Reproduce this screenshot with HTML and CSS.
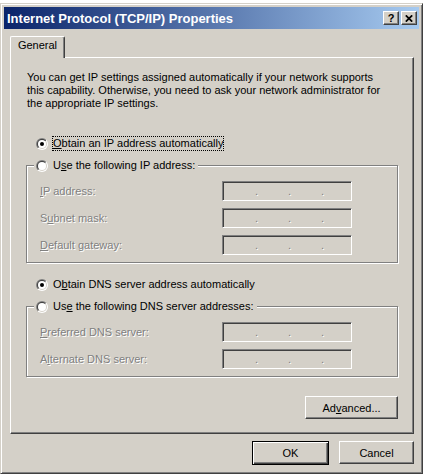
FILE: index.html
```html
<!DOCTYPE html>
<html>
<head>
<meta charset="utf-8">
<title>Internet Protocol (TCP/IP) Properties</title>
<link rel="stylesheet" href="styles.css">
</head>
<body>
<svg class="defs" width="0" height="0" aria-hidden="true">
  <defs>
    <linearGradient id="rOuter" x1="0" y1="0" x2="1" y2="1">
      <stop offset="0.5" stop-color="#808080"/><stop offset="0.5" stop-color="#ffffff"/>
    </linearGradient>
    <linearGradient id="rInner" x1="0" y1="0" x2="1" y2="1">
      <stop offset="0.5" stop-color="#404040"/><stop offset="0.5" stop-color="#d4d0c8"/>
    </linearGradient>
  </defs>
</svg>
<div class="window">
  <div class="titlebar">
    <span class="title">Internet Protocol (TCP/IP) Properties</span>
    <div class="caption-buttons">
      <span class="cap-btn help">?</span>
      <span class="cap-btn close"><svg width="8" height="7" viewBox="0 0 8 7"><path d="M0.8 0.3 L7.2 6.7 M7.2 0.3 L0.8 6.7" stroke="#000" stroke-width="1.7" fill="none"/></svg></span>
    </div>
  </div>
  <div class="dialog-body">
    <div class="tabs"><div class="tab active">General</div></div>
    <div class="panel">
      <p class="intro">You can get IP settings assigned automatically if your network supports<br>this capability. Otherwise, you need to ask your network administrator for<br>the appropriate IP settings.</p>

      <div class="radio-row first">
        <svg class="radio" width="12" height="12" viewBox="0 0 12 12"><circle cx="6" cy="6" r="6" fill="url(#rOuter)"/><circle cx="6" cy="6" r="5" fill="url(#rInner)"/><circle cx="6" cy="6" r="4" fill="#fff"/><circle cx="6" cy="6" r="2" fill="#000"/></svg>
        <span class="radio-label focus"><u>O</u>btain an IP address automatically</span>
      </div>

      <fieldset class="group">
        <legend class="radio-row legend">
          <svg class="radio" width="12" height="12" viewBox="0 0 12 12"><circle cx="6" cy="6" r="6" fill="url(#rOuter)"/><circle cx="6" cy="6" r="5" fill="url(#rInner)"/><circle cx="6" cy="6" r="4" fill="#fff"/></svg>
          <span class="radio-label">U<u>s</u>e the following IP address:</span>
        </legend>
        <div class="field-row">
          <span class="field-label disabled"><u>I</u>P address:</span>
          <div class="ip-field"><span class="seg"></span><span class="dot">.</span><span class="seg"></span><span class="dot">.</span><span class="seg"></span><span class="dot">.</span><span class="seg"></span></div>
        </div>
        <div class="field-row">
          <span class="field-label disabled">S<u>u</u>bnet mask:</span>
          <div class="ip-field"><span class="seg"></span><span class="dot">.</span><span class="seg"></span><span class="dot">.</span><span class="seg"></span><span class="dot">.</span><span class="seg"></span></div>
        </div>
        <div class="field-row">
          <span class="field-label disabled"><u>D</u>efault gateway:</span>
          <div class="ip-field"><span class="seg"></span><span class="dot">.</span><span class="seg"></span><span class="dot">.</span><span class="seg"></span><span class="dot">.</span><span class="seg"></span></div>
        </div>
      </fieldset>

      <div class="radio-row second">
        <svg class="radio" width="12" height="12" viewBox="0 0 12 12"><circle cx="6" cy="6" r="6" fill="url(#rOuter)"/><circle cx="6" cy="6" r="5" fill="url(#rInner)"/><circle cx="6" cy="6" r="4" fill="#fff"/><circle cx="6" cy="6" r="2" fill="#000"/></svg>
        <span class="radio-label">O<u>b</u>tain DNS server address automatically</span>
      </div>

      <fieldset class="group">
        <legend class="radio-row legend">
          <svg class="radio" width="12" height="12" viewBox="0 0 12 12"><circle cx="6" cy="6" r="6" fill="url(#rOuter)"/><circle cx="6" cy="6" r="5" fill="url(#rInner)"/><circle cx="6" cy="6" r="4" fill="#fff"/></svg>
          <span class="radio-label">Us<u>e</u> the following DNS server addresses:</span>
        </legend>
        <div class="field-row">
          <span class="field-label disabled"><u>P</u>referred DNS server:</span>
          <div class="ip-field"><span class="seg"></span><span class="dot">.</span><span class="seg"></span><span class="dot">.</span><span class="seg"></span><span class="dot">.</span><span class="seg"></span></div>
        </div>
        <div class="field-row">
          <span class="field-label disabled">A<u>l</u>ternate DNS server:</span>
          <div class="ip-field"><span class="seg"></span><span class="dot">.</span><span class="seg"></span><span class="dot">.</span><span class="seg"></span><span class="dot">.</span><span class="seg"></span></div>
        </div>
      </fieldset>

      <div class="advanced-row">
        <button class="btn advanced" type="button">Ad<u>v</u>anced...</button>
      </div>
    </div>
    <div class="button-row">
      <button class="btn default" type="button">OK</button>
      <button class="btn" type="button">Cancel</button>
    </div>
  </div>
</div>
</body>
</html>
```
FILE: styles.css
```css
* {
  box-sizing: border-box;
}

html,
body {
  margin: 0;
  padding: 0;
  background: #ffffff;
}

body {
  font-family: "Liberation Sans", Arial, sans-serif;
  font-size: 11px;
  color: #000000;
}

.defs {
  position: absolute;
  width: 0;
  height: 0;
}

/* ---------- window frame ---------- */
.window {
  width: 423px;
  height: 471px;
  margin-top: 3px;
  padding: 3px;
  background: #d4d0c8;
  border: 1px solid;
  border-color: #d4d0c8 #404040 #404040 #d4d0c8;
  box-shadow: inset 1px 1px 0 #ffffff, inset -1px -1px 0 #808080;
  display: flex;
  flex-direction: column;
}

.titlebar {
  height: 22px;
  flex: none;
  padding: 0 2px 0 3px;
  background: linear-gradient(to right, #0a246a 0%, #a6caf0 100%);
  display: flex;
  align-items: center;
  justify-content: space-between;
}

.title {
  color: #ffffff;
  font-weight: bold;
  font-size: 13px;
  white-space: nowrap;
}

.caption-buttons {
  display: flex;
  gap: 2px;
}

.cap-btn {
  width: 16px;
  height: 14px;
  background: #d4d0c8;
  border: 1px solid;
  border-color: #ffffff #404040 #404040 #ffffff;
  box-shadow: inset -1px -1px 0 #808080;
  display: flex;
  align-items: center;
  justify-content: center;
}

.cap-btn.help {
  font-weight: bold;
  font-size: 11px;
  line-height: 12px;
  padding-bottom: 1px;
}

/* ---------- dialog body ---------- */
.dialog-body {
  flex: 1;
  display: flex;
  flex-direction: column;
  padding: 7px 5px 0 6px;
}

.tabs {
  height: 21px;
  flex: none;
  display: flex;
  align-items: flex-start;
}

.tab {
  position: relative;
  z-index: 1;
  width: 55px;
  height: 22px;
  background: #d4d0c8;
  border-top: 1px solid #ffffff;
  border-left: 1px solid #ffffff;
  border-right: 1px solid #404040;
  box-shadow: inset -1px 0 0 #808080;
  border-radius: 2px 2px 0 0;
  text-align: center;
  line-height: 13px;
  padding-top: 2px;
}

.panel {
  width: 404px;
  height: 377px;
  flex: none;
  border-top: 1px solid #ffffff;
  border-left: 1px solid #ffffff;
  border-right: 1px solid #404040;
  border-bottom: 1px solid #404040;
  box-shadow: inset -1px -1px 0 #808080;
  padding: 13px 15px 0 15px;
  display: flex;
  flex-direction: column;
}

.intro {
  margin: 0;
  padding-left: 1px;
  line-height: 13px;
  white-space: nowrap;
}

/* ---------- radios ---------- */
.radio-row {
  height: 15px;
  display: flex;
  align-items: center;
  white-space: nowrap;
}

.radio-row.first {
  margin-top: 26px;
  padding-left: 10px;
}

.radio-row.second {
  margin-top: 14px;
  padding-left: 10px;
}

.radio {
  flex: none;
  display: block;
}

.radio-label {
  margin-left: 4px;
  padding: 0 1px;
  height: 15px;
  line-height: 15px;
}

.radio-label.focus {
  outline: 1px dotted #000000;
  outline-offset: -1px;
}

/* ---------- group boxes ---------- */
.group {
  margin: 7px 0 0 0;
  padding: 8px 0 7px 13px;
  width: 372px;
  min-inline-size: 0;
  border: 1px solid #808080;
  box-shadow: inset 1px 1px 0 #ffffff, 1px 1px 0 #ffffff;
}

.legend {
  margin-left: -6px;
  padding: 0 2px;
  background: #d4d0c8;
}

.field-row {
  height: 20px;
  display: flex;
  align-items: center;
}

.field-row + .field-row {
  margin-top: 7px;
}

.field-label {
  width: 182px;
  white-space: nowrap;
}

.disabled {
  color: #808080;
  text-shadow: 1px 1px 0 #ffffff;
}

.ip-field {
  width: 130px;
  height: 20px;
  background: #d4d0c8;
  border: 1px solid;
  border-color: #808080 #ffffff #ffffff #808080;
  box-shadow: inset 1px 1px 0 #404040, inset -1px -1px 0 #d4d0c8;
  display: flex;
  align-items: center;
  padding-left: 2px;
  line-height: 13px;
}

.seg {
  width: 30px;
  height: 13px;
  flex: none;
}

.dot {
  width: 3px;
  flex: none;
  color: #808080;
  text-shadow: 1px 1px 0 #ffffff;
}

/* ---------- buttons ---------- */
.btn {
  font-family: "Liberation Sans", Arial, sans-serif;
  font-size: 11px;
  color: #000000;
  background: #d4d0c8;
  width: 75px;
  height: 23px;
  padding: 0;
  margin: 0;
  border: 1px solid;
  border-color: #ffffff #404040 #404040 #ffffff;
  box-shadow: inset -1px -1px 0 #808080;
  border-radius: 0;
}

.btn.default {
  width: 77px;
  height: 24px;
  border-color: #000000;
  box-shadow: inset 1px 1px 0 #ffffff, inset -1px -1px 0 #404040, inset -2px -2px 0 #808080;
}

.advanced-row {
  margin-top: 19px;
  display: flex;
  justify-content: flex-end;
  width: 372px;
}

.btn.advanced {
  width: 93px;
  height: 23px;
}

.button-row {
  margin-top: 7px;
  display: flex;
  justify-content: flex-end;
  align-items: flex-start;
  gap: 10px;
}
```
